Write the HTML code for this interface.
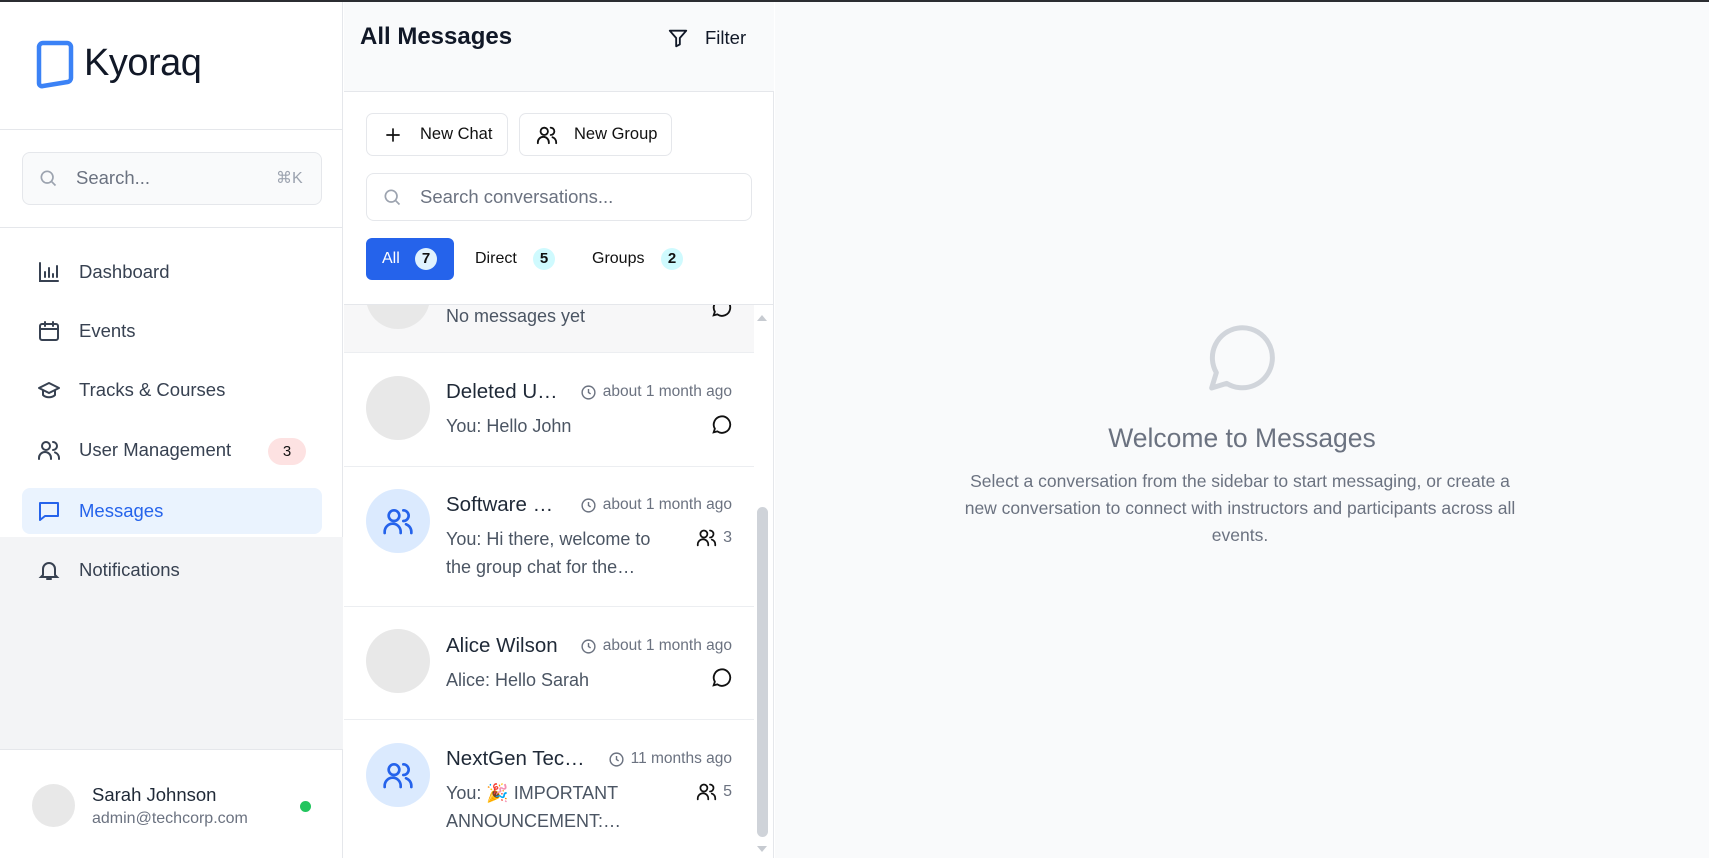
<!DOCTYPE html>
<html><head><meta charset="utf-8"><style>
*{box-sizing:border-box;margin:0;padding:0}
body{width:1709px;height:858px;overflow:hidden;font-family:"Liberation Sans",Arial,sans-serif;background:#fff;position:relative;color:#111827}
.a{position:absolute}
svg{display:block}
.nav{position:absolute;left:37px;display:flex;align-items:center;font-size:18.5px;color:#374151}
.nav svg{margin-right:18px}
.item{position:absolute;left:344px;width:410px;border-bottom:1px solid #eceef1;background:#fff;overflow:hidden}
.av{position:absolute;left:22px;width:64px;height:64px;border-radius:50%;background:#e8e8e8}
.av.g{background:#dbeafe;display:flex;align-items:center;justify-content:center}
.nm{position:absolute;left:102px;font-size:20.5px;color:#1f2937}
.tm{position:absolute;right:22px;font-size:15.5px;color:#6b7280;display:flex;align-items:center;gap:6px}
.ms{position:absolute;left:102px;font-size:18px;color:#4b5563;line-height:28px}
.ic{position:absolute;right:22px}
</style></head><body>
<div class="a" style="left:0;top:0;width:1709px;height:2px;background:#2b2d31"></div>
<!-- sidebar -->
<div class="a" style="left:0;top:2px;width:343px;height:856px;background:#fff;border-right:1px solid #e5e7eb"></div>
<div class="a" style="left:0;top:537px;width:343px;height:212px;background:#f3f4f6"></div>
<svg class="a" style="left:36px;top:40px" width="40" height="50" viewBox="0 0 40 50"><path d="M7 3h24a4 4 0 0 1 4 4v31a4 4 0 0 1-3.5 4L7 46a3 3 0 0 1-4-3V7a4 4 0 0 1 4-4z" fill="none" stroke="#3b82f6" stroke-width="4.5" stroke-linejoin="round"/></svg>
<div class="a" style="left:84px;top:42px;font-size:38px;color:#111827;letter-spacing:-0.5px">Kyoraq</div>
<div class="a" style="left:0;top:129px;width:343px;height:1px;background:#e5e7eb"></div>
<div class="a" style="left:22px;top:152px;width:300px;height:53px;border:1px solid #e5e7eb;border-radius:8px;background:#f9fafb"></div>
<svg class="a" style="left:38px;top:168px" width="20" height="20" viewBox="0 0 24 24" fill="none" stroke="#9ca3af" stroke-width="2"><circle cx="11" cy="11" r="7"/><path d="M21 21l-5-5"/></svg>
<div class="a" style="left:76px;top:167px;font-size:18.5px;color:#6b7280">Search...</div>
<div class="a" style="left:276px;top:168px;font-size:16px;color:#9ca3af">⌘K</div>
<div class="a" style="left:0;top:227px;width:343px;height:1px;background:#e5e7eb"></div>

<div class="nav" style="top:260px"><svg width="24" height="24" viewBox="0 0 24 24" fill="none" stroke="#374151" stroke-width="2" stroke-linecap="round"><path d="M3 3v18h18M8 17v-5M12 17V8M16 17v-3M20 17V6"/></svg>Dashboard</div>
<div class="nav" style="top:319px"><svg width="24" height="24" viewBox="0 0 24 24" fill="none" stroke="#374151" stroke-width="2" stroke-linecap="round"><rect x="3" y="5" width="18" height="16" rx="2"/><path d="M8 3v4M16 3v4M3 10h18"/></svg>Events</div>
<div class="nav" style="top:378px"><svg width="24" height="24" viewBox="0 0 24 24" fill="none" stroke="#374151" stroke-width="2" stroke-linejoin="round"><path d="M2 10l10-5 10 5-10 5z"/><path d="M6 12v5c3 3 9 3 12 0v-5"/></svg>Tracks &amp; Courses</div>
<div class="nav" style="top:438px"><svg width="24" height="24" viewBox="0 0 24 24" fill="none" stroke="#374151" stroke-width="2" stroke-linecap="round"><circle cx="9" cy="8" r="4"/><path d="M2 21v-1a6 6 0 0 1 12 0v1M16 4a4 4 0 0 1 0 8M22 21v-1a6 6 0 0 0-4-5.6"/></svg>User Management</div>
<div class="a" style="left:268px;top:438px;width:38px;height:27px;border-radius:14px;background:#fde2e2;font-size:15px;color:#111;text-align:center;line-height:27px">3</div>
<div class="a" style="left:22px;top:488px;width:300px;height:46px;border-radius:8px;background:#eaf3fe"></div>
<div class="nav" style="top:499px;color:#2563eb"><svg width="24" height="24" viewBox="0 0 24 24" fill="none" stroke="#2563eb" stroke-width="2" stroke-linejoin="round"><path d="M3 4h18v13H8l-5 4z"/></svg>Messages</div>
<div class="nav" style="top:558px"><svg width="24" height="24" viewBox="0 0 24 24" fill="none" stroke="#374151" stroke-width="2" stroke-linecap="round"><path d="M6 17V11a6 6 0 0 1 12 0v6l2 2H4zM10 21h4"/></svg>Notifications</div>

<div class="a" style="left:0;top:749px;width:343px;height:1px;background:#e5e7eb"></div>
<div class="a" style="left:32px;top:784px;width:43px;height:43px;border-radius:50%;background:#e8e8e8"></div>
<div class="a" style="left:92px;top:784px;font-size:18.5px;color:#1f2937">Sarah Johnson</div>
<div class="a" style="left:92px;top:810px;font-size:16px;color:#6b7280">admin@techcorp.com</div>
<div class="a" style="left:300px;top:801px;width:11px;height:11px;border-radius:50%;background:#22c55e"></div>

<!-- middle -->
<div class="a" style="left:344px;top:2px;width:430px;height:856px;background:#fff;border-right:1px solid #e5e7eb"></div>
<div class="a" style="left:344px;top:2px;width:430px;height:90px;background:#f9fafb;border-bottom:1px solid #e5e7eb"></div>
<div class="a" style="left:360px;top:23px;font-size:24px;font-weight:bold;color:#111827">All Messages</div>
<svg class="a" style="left:667px;top:27px" width="22" height="22" viewBox="0 0 24 24" fill="none" stroke="#111827" stroke-width="2" stroke-linejoin="round"><path d="M3 4h18l-7 8v7l-4 2v-9z"/></svg>
<div class="a" style="left:705px;top:27px;font-size:18.5px;color:#111827">Filter</div>

<div class="a" style="left:366px;top:113px;width:142px;height:43px;border:1px solid #e5e7eb;border-radius:7px;background:#fff"></div>
<svg class="a" style="left:383px;top:125px" width="20" height="20" viewBox="0 0 24 24" fill="none" stroke="#111" stroke-width="2"><path d="M12 4v16M4 12h16"/></svg>
<div class="a" style="left:420px;top:125px;font-size:16.5px;color:#111">New Chat</div>
<div class="a" style="left:519px;top:113px;width:153px;height:43px;border:1px solid #e5e7eb;border-radius:7px;background:#fff"></div>
<svg class="a" style="left:536px;top:124px" width="22" height="22" viewBox="0 0 24 24" fill="none" stroke="#111" stroke-width="2" stroke-linecap="round"><circle cx="9" cy="8" r="4"/><path d="M2 21v-1a6 6 0 0 1 12 0v1M16 4a4 4 0 0 1 0 8M22 21v-1a6 6 0 0 0-4-5.6"/></svg>
<div class="a" style="left:574px;top:125px;font-size:16.5px;color:#111">New Group</div>

<div class="a" style="left:366px;top:173px;width:386px;height:48px;border:1px solid #e5e7eb;border-radius:8px;background:#fff"></div>
<svg class="a" style="left:382px;top:187px" width="20" height="20" viewBox="0 0 24 24" fill="none" stroke="#9ca3af" stroke-width="2"><circle cx="11" cy="11" r="7"/><path d="M21 21l-5-5"/></svg>
<div class="a" style="left:420px;top:186px;font-size:18.5px;color:#6b7280">Search conversations...</div>

<div class="a" style="left:366px;top:238px;width:88px;height:42px;border-radius:6px;background:#2563eb"></div>
<div class="a" style="left:382px;top:250px;font-size:16px;color:#fff">All</div>
<div class="a" style="left:415px;top:248px;width:22px;height:22px;border-radius:50%;background:#e0f2fe;color:#111;font-size:15px;font-weight:bold;text-align:center;line-height:22px">7</div>
<div class="a" style="left:475px;top:250px;font-size:16px;color:#111">Direct</div>
<div class="a" style="left:533px;top:248px;width:22px;height:22px;border-radius:50%;background:#cffafe;color:#111;font-size:15px;font-weight:bold;text-align:center;line-height:22px">5</div>
<div class="a" style="left:592px;top:250px;font-size:16px;color:#111">Groups</div>
<div class="a" style="left:661px;top:248px;width:22px;height:22px;border-radius:50%;background:#cffafe;color:#111;font-size:15px;font-weight:bold;text-align:center;line-height:22px">2</div>

<div class="a" style="left:344px;top:304px;width:430px;height:1px;background:#e5e7eb"></div>
<div class="item" style="top:305px;height:48px;background:#f7f7f8">
 <div class="av" style="top:-40px"></div>
 <div class="ms" style="top:-3px">No messages yet</div>
 <svg class="ic" style="top:-8px" width="22" height="22" viewBox="0 0 24 24" fill="none" stroke="#111" stroke-width="2"><path d="M4 20l1.3-3.9A9 9 0 1 1 8 19z"/></svg>
</div>
<div class="item" style="top:353px;height:114px">
 <div class="av" style="top:23px"></div>
 <div class="nm" style="top:27px">Deleted U…</div>
 <div class="tm" style="top:30px"><svg width="17" height="17" viewBox="0 0 24 24" fill="none" stroke="#6b7280" stroke-width="2"><circle cx="12" cy="12" r="9"/><path d="M12 7v5l3 2"/></svg>about 1 month ago</div>
 <div class="ms" style="top:59px">You: Hello John</div>
 <svg class="ic" style="top:61px" width="22" height="22" viewBox="0 0 24 24" fill="none" stroke="#111" stroke-width="2"><path d="M4 20l1.3-3.9A9 9 0 1 1 8 19z"/></svg>
</div>
<div class="item" style="top:467px;height:140px">
 <div class="av g" style="top:22px"><svg width="32" height="32" viewBox="0 0 24 24" fill="none" stroke="#2563eb" stroke-width="2" stroke-linecap="round"><circle cx="9" cy="8" r="4"/><path d="M2 21v-1a6 6 0 0 1 12 0v1M16 4a4 4 0 0 1 0 8M22 21v-1a6 6 0 0 0-4-5.6"/></svg></div>
 <div class="nm" style="top:26px">Software …</div>
 <div class="tm" style="top:29px"><svg width="17" height="17" viewBox="0 0 24 24" fill="none" stroke="#6b7280" stroke-width="2"><circle cx="12" cy="12" r="9"/><path d="M12 7v5l3 2"/></svg>about 1 month ago</div>
 <div class="ms" style="top:58px;width:218px">You: Hi there, welcome to the group chat for the…</div>
 <div class="tm" style="top:60px;font-size:16px"><svg width="21" height="21" viewBox="0 0 24 24" fill="none" stroke="#111" stroke-width="2" stroke-linecap="round"><circle cx="9" cy="8" r="4"/><path d="M2 21v-1a6 6 0 0 1 12 0v1M16 4a4 4 0 0 1 0 8M22 21v-1a6 6 0 0 0-4-5.6"/></svg>3</div>
</div>
<div class="item" style="top:607px;height:113px">
 <div class="av" style="top:22px"></div>
 <div class="nm" style="top:27px">Alice Wilson</div>
 <div class="tm" style="top:30px"><svg width="17" height="17" viewBox="0 0 24 24" fill="none" stroke="#6b7280" stroke-width="2"><circle cx="12" cy="12" r="9"/><path d="M12 7v5l3 2"/></svg>about 1 month ago</div>
 <div class="ms" style="top:59px">Alice: Hello Sarah</div>
 <svg class="ic" style="top:60px" width="22" height="22" viewBox="0 0 24 24" fill="none" stroke="#111" stroke-width="2"><path d="M4 20l1.3-3.9A9 9 0 1 1 8 19z"/></svg>
</div>
<div class="item" style="top:720px;height:140px;border-bottom:none">
 <div class="av g" style="top:23px"><svg width="32" height="32" viewBox="0 0 24 24" fill="none" stroke="#2563eb" stroke-width="2" stroke-linecap="round"><circle cx="9" cy="8" r="4"/><path d="M2 21v-1a6 6 0 0 1 12 0v1M16 4a4 4 0 0 1 0 8M22 21v-1a6 6 0 0 0-4-5.6"/></svg></div>
 <div class="nm" style="top:27px">NextGen Tec…</div>
 <div class="tm" style="top:30px"><svg width="17" height="17" viewBox="0 0 24 24" fill="none" stroke="#6b7280" stroke-width="2"><circle cx="12" cy="12" r="9"/><path d="M12 7v5l3 2"/></svg>11 months ago</div>
 <div class="ms" style="top:59px;width:218px">You: 🎉 IMPORTANT ANNOUNCEMENT:…</div>
 <div class="tm" style="top:61px;font-size:16px"><svg width="21" height="21" viewBox="0 0 24 24" fill="none" stroke="#111" stroke-width="2" stroke-linecap="round"><circle cx="9" cy="8" r="4"/><path d="M2 21v-1a6 6 0 0 1 12 0v1M16 4a4 4 0 0 1 0 8M22 21v-1a6 6 0 0 0-4-5.6"/></svg>5</div>
</div>
<!-- scrollbar -->
<div class="a" style="left:754px;top:305px;width:17px;height:553px;background:#fff"></div>
<div class="a" style="left:757px;top:315px;width:0;height:0;border-left:5px solid transparent;border-right:5px solid transparent;border-bottom:6px solid #c7cbd1"></div>
<div class="a" style="left:757px;top:507px;width:11px;height:330px;border-radius:6px;background:#cfd3d9"></div>
<div class="a" style="left:757px;top:846px;width:0;height:0;border-left:5px solid transparent;border-right:5px solid transparent;border-top:6px solid #c7cbd1"></div>

<!-- right -->
<div class="a" style="left:775px;top:2px;width:934px;height:856px;background:#f9fafb"></div>
<svg class="a" style="left:1200px;top:318px" width="80" height="80" viewBox="0 0 24 24" fill="none" stroke="#d1d5db" stroke-width="1.5" stroke-linejoin="round"><path d="M3.5 21l1.4-4.6A9 9 0 1 1 8 19.6z"/></svg>
<div class="a" style="left:775px;top:423px;width:934px;text-align:center;font-size:26.5px;color:#6b7280">Welcome to Messages</div>
<div class="a" style="left:954px;top:468px;width:572px;text-align:center;font-size:17.5px;line-height:27px;color:#6b7280">Select a conversation from the sidebar to start messaging, or create a new conversation to connect with instructors and participants across all events.</div>
</body></html>
